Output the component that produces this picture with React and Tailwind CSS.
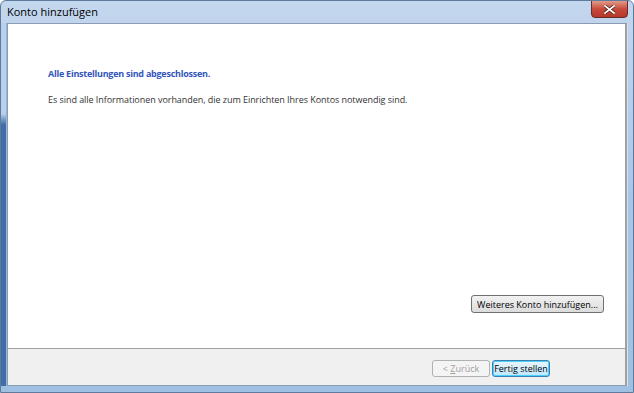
export default function App() {
    return (
        <div
            className="w-[634px] h-[393px] flex flex-col overflow-hidden text-[9px] text-[#1e1e1e] bg-gradient-to-b from-[#c3d7ee] via-[#a9c5e6] to-[#9fbfe3] border border-[#5f7a9c] rounded-t-[6px]"
            style={{ fontFamily: '"Open Sans", "Noto Sans", sans-serif' }}
        >
            {/* title bar */}
            <div className="h-[22px] flex items-start justify-between pl-[6px] pr-[5px]">
                <span className="mt-[3px] text-[11px] text-black">Konto hinzufügen</span>
                <button className="w-[37px] h-[18px] mt-[-1px] rounded-b-[4px] border border-[#6b2a23] bg-gradient-to-b from-[#e09a8a] via-[#c7493a] to-[#b33a2c] flex items-center justify-center">
                    <svg width="11" height="9" viewBox="0 0 11 9">
                        <path d="M1 1 L10 8 M10 1 L1 8" stroke="#4a1a14" strokeWidth="3.2" strokeLinecap="square" />
                        <path d="M1 1 L10 8 M10 1 L1 8" stroke="#ffffff" strokeWidth="1.8" strokeLinecap="square" />
                    </svg>
                </button>
            </div>

            <div className="flex-1 flex">
                <div className="w-[6px] bg-gradient-to-b from-[#b9d0ec] via-[#b9d0ec] via-[25%] to-[#3f6fa6] to-[28%] border-r border-[#9ab5d6]" />

                {/* client area */}
                <div className="flex-1 flex flex-col border border-[#8a9bb3] border-r-[2px] border-r-[#a0a0a0] bg-white">
                    <div className="flex-1 flex flex-col pl-[40px] pr-[21px] pt-[43px] pb-[35px]">
                        <p className="font-bold text-[#3355bb] text-[9px] leading-[13.5px] tracking-[-0.25px]">
                            Alle Einstellungen sind abgeschlossen.
                        </p>
                        <p className="mt-[12px] text-[9px] leading-[13.5px] tracking-[-0.05px] text-[#333]">
                            Es sind alle Informationen vorhanden, die zum Einrichten Ihres Kontos notwendig sind.
                        </p>
                        <div className="mt-auto flex justify-end">
                            <button className="h-[18px] w-[133px] rounded-[3px] border border-[#707070] bg-gradient-to-b from-[#f2f2f2] to-[#dcdcdc] text-[9px] text-black leading-none">
                                Weiteres Konto hinzufügen...
                            </button>
                        </div>
                    </div>

                    <div className="h-[37px] bg-[#f0f0f0] border-t border-[#a0a0a0] flex items-start justify-end gap-[2px] pr-[75px] pt-[11px]">
                        <button className="w-[58px] h-[17px] rounded-[3px] border border-[#adb2b5] bg-[#f4f4f4] text-[9px] text-[#a0a0a0] leading-none">
                            &lt; <span className="underline">Z</span>urück
                        </button>
                        <button className="w-[58px] h-[17px] rounded-[3px] border border-[#3c7fb1] bg-gradient-to-b from-[#eaf6fd] to-[#bee6fd] text-[9px] text-black leading-none shadow-[inset_0_0_0_1px_#48d2fc]">
                            Fertig stellen
                        </button>
                    </div>
                </div>

                <div className="w-[6px] border-l border-[#d7e4f3]" />
            </div>
            <div className="h-[6px]" />
        </div>
    );
}
